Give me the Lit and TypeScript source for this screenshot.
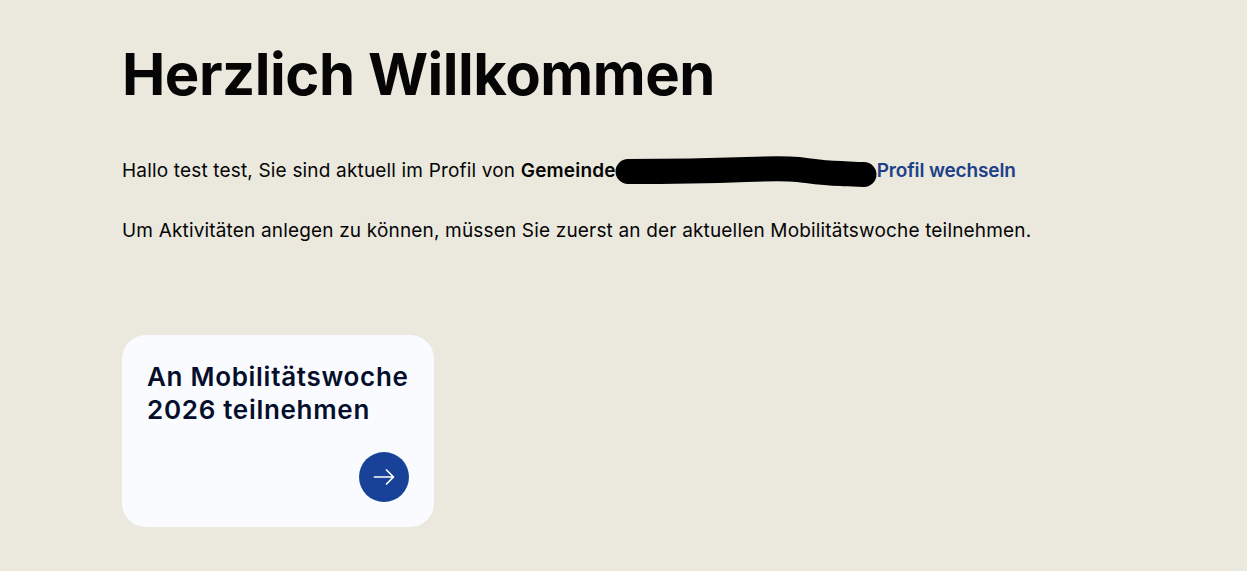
import { LitElement, html, css } from "lit";
import { customElement } from "lit/decorators.js";

@customElement("app-root")
export class AppRoot extends LitElement {
  static styles = css`
    :host {
      display: block;
      min-height: 571px;
      background: #ebe8dd;
      font-family: "Inter", "Liberation Sans", sans-serif;
      color: #050505;
      overflow: hidden;
    }
    .page {
      padding: 35px 0 44px 122px;
      display: flex;
      flex-direction: column;
      align-items: flex-start;
    }
    h1 {
      margin: 0;
      font-size: 58px;
      line-height: 78px;
      font-weight: 700;
      letter-spacing: -0.47px;
      white-space: nowrap;
    }
    p {
      margin: 0;
      font-size: 19px;
      line-height: 30px;
      letter-spacing: 0.17px;
      white-space: nowrap;
    }
    .intro {
      margin-top: 43px;
      display: flex;
      align-items: center;
    }
    .intro b { font-weight: 600; }
    .intro span.t { white-space: pre; }
    .scribble {
      width: 261px;
      height: 30px;
      flex: none;
      display: block;
      overflow: visible;
    }
    a {
      color: #1c4189;
      font-weight: 600;
      letter-spacing: -0.13px;
      text-decoration: none;
    }
    .note { margin-top: 30px; }
    .card {
      margin-top: 89px;
      box-sizing: border-box;
      width: 312px;
      height: 192px;
      border-radius: 24px;
      background: #f9fbfe;
      padding: 25px;
      display: flex;
      flex-direction: column;
      justify-content: space-between;
    }
    .card h2 {
      margin: 0;
      font-size: 26px;
      line-height: 33px;
      font-weight: 600;
      letter-spacing: 0.7px;
      color: #050f2c;
      white-space: nowrap;
    }
    .go {
      align-self: flex-end;
      width: 50px;
      height: 50px;
      border-radius: 50%;
      background: #174297;
      display: flex;
      align-items: center;
      justify-content: center;
    }
    .go svg { display: block; }
  `;

  render() {
    return html`
      <div class="page">
        <h1>Herzlich Willkommen</h1>
        <p class="intro">
          <span class="t">Hallo test test, Sie sind aktuell im Profil von <b>Gemeinde</b></span>
          <svg class="scribble" viewBox="0 0 261 30" aria-hidden="true">
            <path d="M12 15.5 C60 15.5 90 15 130 13.5 C150 12.8 170 12.5 182 13.5 C195 15 205 17 225 17.5 C235 18 242 18.5 248 18.5" fill="none" stroke="#000" stroke-width="25" stroke-linecap="round" stroke-linejoin="round"/>
          </svg>
          <a href="#">Profil wechseln</a>
        </p>
        <p class="note">Um Aktivitäten anlegen zu können, müssen Sie zuerst an der aktuellen Mobilitätswoche teilnehmen.</p>
        <div class="card">
          <h2>An Mobilitätswoche<br />2026 teilnehmen</h2>
          <div class="go">
            <svg width="24" height="24" viewBox="0 0 24 24" fill="none" stroke="#fff" stroke-width="1.7" stroke-linecap="round" stroke-linejoin="round">
              <path d="M2.5 12H21.5M14.5 5L21.5 12L14.5 19"/>
            </svg>
          </div>
        </div>
      </div>
    `;
  }
}
